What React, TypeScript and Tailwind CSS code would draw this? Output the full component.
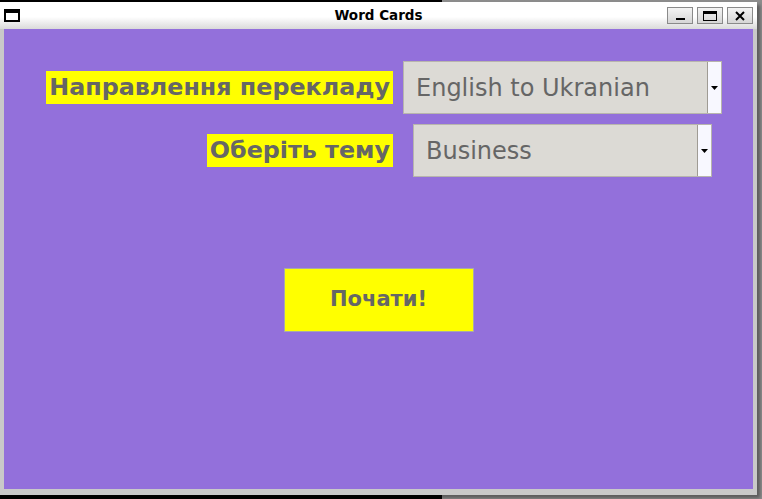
import React from 'react';

const font = { fontFamily: '"DejaVu Sans", "Noto Sans", sans-serif' };

function TitleButton({ children }: { children: React.ReactNode }) {
  return (
    <div className="w-[26px] h-[17px] border border-[#8a8a8a] bg-gradient-to-b from-[#f4f4f4] to-[#d6d6d6] flex items-center justify-center">
      {children}
    </div>
  );
}

function Combo({ value, width }: { value: string; width: string }) {
  return (
    <div className={`flex h-[53px] border border-[#b8b5ad] ${width}`}>
      <div className="flex-1 bg-[#dcdad5] border-r border-[#9f9b94] flex items-center pl-[12px] text-[24px] text-[#666666]">
        {value}
      </div>
      <div className="w-[13px] bg-[#f8f8ff] flex items-center justify-center">
        <svg width="7" height="4" viewBox="0 0 7 4">
          <path d="M0 0h7L3.5 4z" fill="#000" />
        </svg>
      </div>
    </div>
  );
}

export default function App() {
  return (
    <div
      className="w-[762px] h-[499px] overflow-hidden bg-gradient-to-r from-black from-[58%] to-[#8c8c8c] to-[58%]"
      style={font}
    >
      <div className="mt-[2px] w-[757px] h-[493px] flex flex-col shadow-[3px_3px_3px_rgba(0,0,0,0.35)]">
        {/* title bar */}
        <div className="h-[27px] bg-gradient-to-b from-white from-[55%] to-[#dadada] flex items-center relative">
          <div className="ml-[4px] w-[16px] h-[13px] border-2 border-black border-t-[4px] bg-white" />
          <div className="absolute left-0 right-0 text-center text-[13.5px] font-bold text-black">Word Cards</div>
          <div className="ml-auto mr-[4px] flex gap-[4px]">
            <TitleButton>
              <div className="w-[9px] h-[2px] bg-black mt-[7px]" />
            </TitleButton>
            <TitleButton>
              <div className="w-[14px] h-[10px] border border-black border-t-[3px]" />
            </TitleButton>
            <TitleButton>
              <svg width="10" height="10" viewBox="0 0 10 10">
                <path d="M1 1L9 9M9 1L1 9" stroke="#000" strokeWidth="2" />
              </svg>
            </TitleButton>
          </div>
        </div>

        {/* client area */}
        <div className="flex-1 bg-[#c9c9c9] pl-[4px] pr-[4px] pb-[6px]">
          <div className="h-full bg-[#9370db] pt-[32px] flex flex-col">
            <div className="flex items-center">
              <div className="w-[389px] flex justify-end">
                <span className="bg-[#ffff00] text-[#666666] font-bold text-[23.8px] leading-[33px] px-[3px]">
                  Направлення перекладу
                </span>
              </div>
              <div className="ml-[10px]">
                <Combo value="English to Ukranian" width="w-[319px]" />
              </div>
            </div>
            <div className="flex items-center mt-[10px]">
              <div className="w-[389px] flex justify-end">
                <span className="bg-[#ffff00] text-[#666666] font-bold text-[23.8px] leading-[33px] px-[3px]">
                  Оберіть тему
                </span>
              </div>
              <div className="ml-[20px]">
                <Combo value="Business" width="w-[299px]" />
              </div>
            </div>
            <div className="flex justify-center mt-[91px]">
              <button className="w-[190px] h-[64px] bg-[#ffff00] border border-[#a9a9a9] text-[#666666] font-bold text-[21px]">
                Почати!
              </button>
            </div>
          </div>
        </div>
      </div>
    </div>
  );
}
